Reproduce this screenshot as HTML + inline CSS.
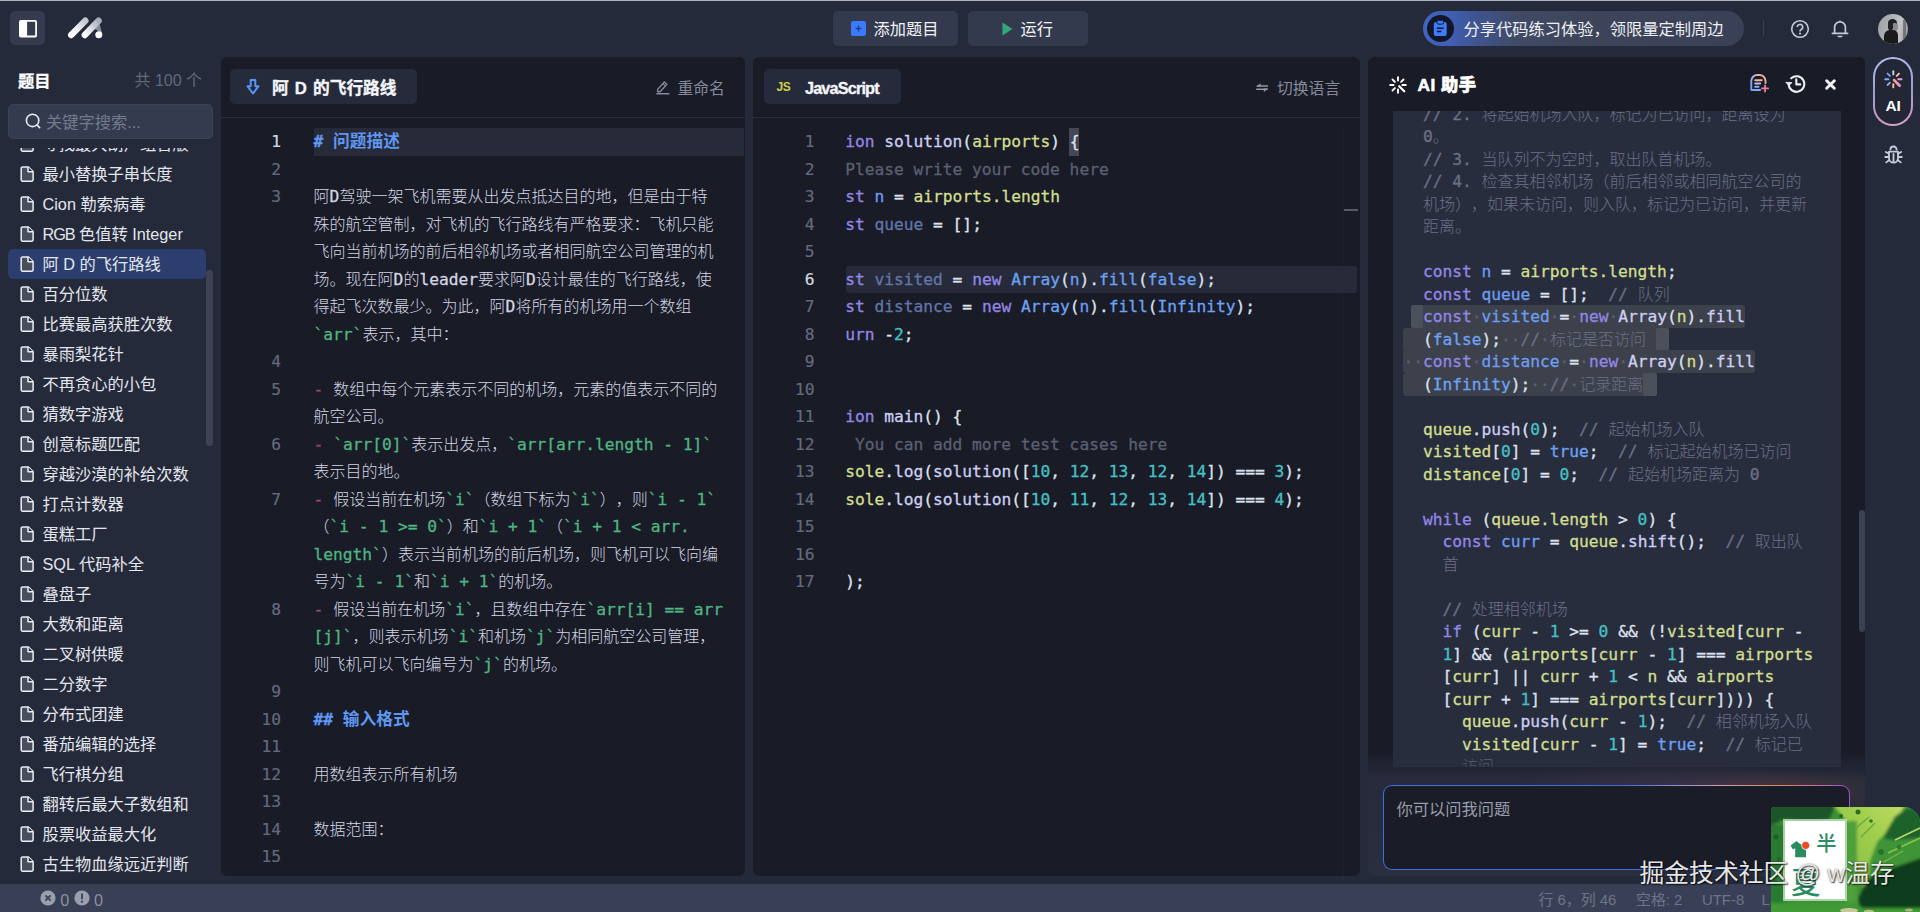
<!DOCTYPE html>
<html lang="zh-CN">
<head>
<meta charset="utf-8">
<title>代码练习</title>
<style>
*{box-sizing:border-box;margin:0;padding:0}
html,body{width:1920px;height:912px;overflow:hidden;background:#252a3a}
body{position:relative;font-family:"Liberation Sans","Noto Sans CJK SC",sans-serif;font-size:16.25px;color:#e6e8f0;text-spacing-trim:space-all}
.abs{position:absolute}
.mono{font-family:"DejaVu Sans Mono","Liberation Mono","Noto Sans CJK SC",monospace;letter-spacing:-0.03px}
#topline{left:0;top:0;width:1920px;height:1px;background:#aeb2bf}
.tbtn{position:absolute;top:11px;height:35px;border-radius:5px;background:#333a4d}
.tbtn span{position:absolute;top:0.5px;line-height:35px;font-size:16.25px;color:#f2f3f7;white-space:nowrap}
#sb-title{-webkit-text-stroke:0.3px;left:18px;top:68.5px;line-height:24px;font-weight:bold;font-size:16.25px;color:#fff}
#sb-count{left:134.5px;top:69px;line-height:24px;font-size:16px;color:#62687a;white-space:nowrap}
#search{left:8px;top:104px;width:205px;height:34.5px;border-radius:5px;background:#353b4f;border:1px solid #3c4257}
#search span{position:absolute;left:37px;top:1px;line-height:33px;font-size:16.25px;color:#747a8b;white-space:nowrap}
#list{left:0;top:147.5px;width:218px;height:733px;overflow:hidden}
.it{position:absolute;left:8px;width:198px;height:30px;border-radius:5px}
.it.sel{background:#2b3e6e}
.it svg{position:absolute;left:12px;top:7px}
.it span{position:absolute;left:34.5px;top:0;line-height:30px;font-size:16.25px;color:#e4e6ee;white-space:nowrap}
#sb-scroll{left:206px;top:270px;width:7px;height:176px;background:#3d4255;border-radius:3px}
.panel{position:absolute;top:57px;height:819px;background:#191b27;border-radius:6px;overflow:hidden}
.sep{position:absolute;left:0;right:0;top:60px;height:1px;background:#2a2d3b}
.tab{position:absolute;top:12px;height:35px;border-radius:5px;background:#262b3b}
.tab b{-webkit-text-stroke:0.35px;position:absolute;top:1.5px;line-height:35px;font-size:16.7px;word-spacing:1.5px;color:#f4f5f9;white-space:nowrap}
.hact{position:absolute;top:19.7px;line-height:24px;font-size:15.8px;color:#858a9b;white-space:nowrap}
.ed{position:absolute;left:0;top:71.1px;right:0}
.ln{position:absolute;left:0;height:27.5px;line-height:27.5px;font-size:16.25px;color:#646a7e;-webkit-text-stroke:0.2px;text-align:right;white-space:pre}
.ln.act{color:#d4d8e4}
.row{-webkit-text-stroke:0.3px;position:absolute;height:27.5px;line-height:27.5px;font-size:16.25px;white-space:pre;color:#d3d6e2}
.z{font-size:16px;font-weight:300;-webkit-text-stroke:0;letter-spacing:0}
.hl{position:absolute;height:27.5px;background:#262a39}
.k{color:#9488e6}.v{color:#6f9df0}.d{color:#6276a8}.y{color:#d2df8e}.f{color:#cdd0f2}.w{color:#dfe2ee}.t{color:#45c1c6}.c{color:#5b6072}.b{color:#6ea3f3}
.g{color:#4fb581}.r{color:#99455b}.h{color:#5f97f1;font-weight:bold}
.h .z{font-weight:bold;font-size:16.7px}
#aicode{left:25px;top:54px;width:448px;height:656px;background:#282d3e;overflow:hidden}
#aicode .c{color:#6b7083}
.ar{-webkit-text-stroke:0.3px;position:absolute;left:30px;height:22.5px;line-height:22.5px;font-size:16.25px;white-space:pre;color:#dfe2ee}
.ws{color:#5b6070}
.selr{position:absolute;height:22.7px;background:#3d414c;border-radius:3px}
.sell{position:absolute;height:22.7px;background:#4c505b;border-radius:2px}
#status{left:0;top:884px;width:1920px;height:28px;background:#394055}
#status span{position:absolute;top:4px;line-height:24px;font-size:14.9px;color:#6d7489;white-space:nowrap}
</style>
</head>
<body>
<div id="topline" class="abs"></div>
<div id="topbar">
  <div class="abs" style="left:10px;top:11px;width:35px;height:34px;border-radius:5px;background:#353a4e"></div>
  <svg class="abs" style="left:18.5px;top:20px" width="18" height="18" viewBox="0 0 18 18"><rect x="0.9" y="0.9" width="16.2" height="15.6" rx="1" fill="none" stroke="#fff" stroke-width="1.8"/><rect x="0.9" y="0.9" width="7.2" height="15.6" fill="#fff"/></svg>
  <svg class="abs" style="left:66px;top:15px" width="40" height="26" viewBox="0 0 40 26">
    <defs><linearGradient id="lg1" x1="0" y1="1" x2="1" y2="0"><stop offset="0" stop-color="#ffffff"/><stop offset="0.55" stop-color="#e4e6ec"/><stop offset="1" stop-color="#c4c7d0"/></linearGradient>
    <linearGradient id="lg2" x1="0" y1="1" x2="1" y2="0"><stop offset="0" stop-color="#ffffff"/><stop offset="0.5" stop-color="#d6d8df"/><stop offset="1" stop-color="#a9adb9"/></linearGradient></defs>
    <path d="M32.6 5.3 L36.2 19 L27 12.500 Z" fill="#9a9eab" opacity="0.85"/>
    <path d="M5.200 20 L19.300 5.700" stroke="url(#lg1)" stroke-width="6.400" stroke-linecap="round" fill="none"/>
    <path d="M18.800 20 L32.600 5.700" stroke="url(#lg2)" stroke-width="6.400" stroke-linecap="round" fill="none"/>
    <circle cx="32.800" cy="19.800" r="3.500" fill="#fff"/>
  </svg>

  <div class="tbtn" style="left:833px;width:125px">
    <svg class="abs" style="left:18px;top:10px" width="15" height="15" viewBox="0 0 15 15"><rect width="15" height="15" rx="2.2" fill="#3b7bfb"/><path d="M7.5 4.6v5.8M4.6 7.5h5.8" stroke="#1d3b8a" stroke-width="1.3"/></svg>
    <span style="left:40.5px">添加题目</span>
  </div>
  <div class="tbtn" style="left:968px;width:120px">
    <svg class="abs" style="left:34px;top:10.5px" width="11" height="14" viewBox="0 0 11 14"><path d="M0.5 0.5 L10.5 7 L0.5 13.5 Z" fill="#2fa97c"/></svg>
    <span style="left:52.5px">运行</span>
  </div>

  <div class="abs" style="left:1423px;top:11px;width:321px;height:35px;border-radius:18px;background:linear-gradient(90deg,#3f65c2 0%,#3f60b4 8%,#3f538f 17%,#414b66 29%,#3e455a 50%,#3a4055 100%)"></div>
  <div class="abs" style="left:1427px;top:15px;width:27px;height:27px;border-radius:50%;background:#121628"></div>
  <svg class="abs" style="left:1433px;top:20px" width="14.5" height="16.5" viewBox="0 0 15 18"><rect x="0.5" y="2.2" width="14" height="15.3" rx="2.2" fill="#3d7dfb"/><rect x="4" y="0.3" width="7" height="4.2" rx="1.2" fill="#3d7dfb" stroke="#0d1130" stroke-width="1"/><path d="M3.8 9h7.4M3.8 12.6h5" stroke="#0d1130" stroke-width="1.5"/></svg>
  <div class="abs" style="left:1463.5px;top:12px;line-height:35px;font-size:16.25px;color:#eef0f6;white-space:nowrap">分享代码练习体验，领限量定制周边</div>
  <div class="abs" style="left:1763px;top:20px;width:1px;height:16px;background:#3a4054"></div>
  <svg class="abs" style="left:1790px;top:19px" width="20" height="20" viewBox="0 0 20 20"><circle cx="10" cy="10" r="8.300" fill="none" stroke="#c6c9d5" stroke-width="1.600"/><path d="M7.300 8.100a2.700 2.700 0 1 1 3.900 2.400c-.8.450-1.200.9-1.200 1.900" fill="none" stroke="#c6c9d5" stroke-width="1.600"/><circle cx="10" cy="14.600" r="1.050" fill="#c6c9d5"/></svg>
  <svg class="abs" style="left:1830px;top:18px" width="20" height="21" viewBox="0 0 20 21"><path d="M4.600 15.200V9.200a5.400 5.400 0 0 1 10.800 0V15.200" fill="none" stroke="#c6c9d5" stroke-width="1.700" stroke-linejoin="round"/><path d="M2.400 15.300h15.200" stroke="#c6c9d5" stroke-width="1.700" stroke-linecap="round"/><path d="M8.200 18.400h3.600" stroke="#c6c9d5" stroke-width="1.500" stroke-linecap="round"/><circle cx="10" cy="3.300" r="0.900" fill="#c6c9d5"/></svg>
  <div class="abs" style="left:1878px;top:14px;width:30px;height:30px;border-radius:50%;overflow:hidden;background:linear-gradient(100deg,#9fa1a8 0%,#b1b3b8 45%,#c2c3c6 70%,#8d8f94 100%)">
    <div class="abs" style="left:9.500px;top:4.500px;width:9px;height:8px;border-radius:50% 50% 40% 40%;background:#1e1e20"></div>
    <div class="abs" style="left:13.500px;top:8.500px;width:6.500px;height:8px;border-radius:40% 50% 50% 45%;background:#8c8a88"></div>
    <div class="abs" style="left:10px;top:9px;width:5px;height:7px;border-radius:40%;background:#222224"></div>
    <div class="abs" style="left:6px;top:15.500px;width:13.500px;height:16px;border-radius:6px 5px 0 0;background:#1b1b1d"></div>
    <div class="abs" style="left:25px;top:6px;width:3px;height:20px;background:rgba(70,72,76,.55)"></div>
  </div>
</div>

<div id="sidebar">
  <div id="sb-title" class="abs">题目</div>
  <div id="sb-count" class="abs">共 100 个</div>
  <div id="search" class="abs"><svg class="abs" style="left:16px;top:8.4px" width="17" height="17" viewBox="0 0 17 17"><circle cx="7.6" cy="7.4" r="6.2" fill="none" stroke="#e8eaf1" stroke-width="1.6"/><path d="M12.2 12.2l2.4 2.4" stroke="#e8eaf1" stroke-width="1.7" stroke-linecap="round"/></svg><span>关键字搜索...</span></div>
  <div id="list" class="abs">
    <div class="it" style="top:-18.5px"><svg width="14" height="16" viewBox="0 0 14 16"><path d="M2.6 0.9h5.6l4.9 4.6v8.3a1.4 1.4 0 0 1-1.4 1.4H2.6a1.4 1.4 0 0 1-1.4-1.4V2.3A1.4 1.4 0 0 1 2.6 0.9z" fill="#494e5d" stroke="#eceef4" stroke-width="1.5" stroke-linejoin="round"/><path d="M8 1v4.7h5" fill="#252a3a" stroke="#eceef4" stroke-width="1.5" stroke-linejoin="round"/></svg><span>寻找最大葫芦组合版</span></div>
    <div class="it" style="top:11.5px"><svg width="14" height="16" viewBox="0 0 14 16"><path d="M2.6 0.9h5.6l4.9 4.6v8.3a1.4 1.4 0 0 1-1.4 1.4H2.6a1.4 1.4 0 0 1-1.4-1.4V2.3A1.4 1.4 0 0 1 2.6 0.9z" fill="#494e5d" stroke="#eceef4" stroke-width="1.5" stroke-linejoin="round"/><path d="M8 1v4.7h5" fill="#252a3a" stroke="#eceef4" stroke-width="1.5" stroke-linejoin="round"/></svg><span>最小替换子串长度</span></div>
    <div class="it" style="top:41.5px"><svg width="14" height="16" viewBox="0 0 14 16"><path d="M2.6 0.9h5.6l4.9 4.6v8.3a1.4 1.4 0 0 1-1.4 1.4H2.6a1.4 1.4 0 0 1-1.4-1.4V2.3A1.4 1.4 0 0 1 2.6 0.9z" fill="#494e5d" stroke="#eceef4" stroke-width="1.5" stroke-linejoin="round"/><path d="M8 1v4.7h5" fill="#252a3a" stroke="#eceef4" stroke-width="1.5" stroke-linejoin="round"/></svg><span>Cion 勒索病毒</span></div>
    <div class="it" style="top:71.5px"><svg width="14" height="16" viewBox="0 0 14 16"><path d="M2.6 0.9h5.6l4.9 4.6v8.3a1.4 1.4 0 0 1-1.4 1.4H2.6a1.4 1.4 0 0 1-1.4-1.4V2.3A1.4 1.4 0 0 1 2.6 0.9z" fill="#494e5d" stroke="#eceef4" stroke-width="1.5" stroke-linejoin="round"/><path d="M8 1v4.7h5" fill="#252a3a" stroke="#eceef4" stroke-width="1.5" stroke-linejoin="round"/></svg><span><i style="font-style:normal;letter-spacing:-1.1px">RGB</i> 色值转 Integer</span></div>
    <div class="it sel" style="top:101.5px"><svg width="14" height="16" viewBox="0 0 14 16"><path d="M2.6 0.9h5.6l4.9 4.6v8.3a1.4 1.4 0 0 1-1.4 1.4H2.6a1.4 1.4 0 0 1-1.4-1.4V2.3A1.4 1.4 0 0 1 2.6 0.9z" fill="#494e5d" stroke="#eceef4" stroke-width="1.5" stroke-linejoin="round"/><path d="M8 1v4.7h5" fill="#252a3a" stroke="#eceef4" stroke-width="1.5" stroke-linejoin="round"/></svg><span>阿 D 的飞行路线</span></div>
    <div class="it" style="top:131.5px"><svg width="14" height="16" viewBox="0 0 14 16"><path d="M2.6 0.9h5.6l4.9 4.6v8.3a1.4 1.4 0 0 1-1.4 1.4H2.6a1.4 1.4 0 0 1-1.4-1.4V2.3A1.4 1.4 0 0 1 2.6 0.9z" fill="#494e5d" stroke="#eceef4" stroke-width="1.5" stroke-linejoin="round"/><path d="M8 1v4.7h5" fill="#252a3a" stroke="#eceef4" stroke-width="1.5" stroke-linejoin="round"/></svg><span>百分位数</span></div>
    <div class="it" style="top:161.5px"><svg width="14" height="16" viewBox="0 0 14 16"><path d="M2.6 0.9h5.6l4.9 4.6v8.3a1.4 1.4 0 0 1-1.4 1.4H2.6a1.4 1.4 0 0 1-1.4-1.4V2.3A1.4 1.4 0 0 1 2.6 0.9z" fill="#494e5d" stroke="#eceef4" stroke-width="1.5" stroke-linejoin="round"/><path d="M8 1v4.7h5" fill="#252a3a" stroke="#eceef4" stroke-width="1.5" stroke-linejoin="round"/></svg><span>比赛最高获胜次数</span></div>
    <div class="it" style="top:191.5px"><svg width="14" height="16" viewBox="0 0 14 16"><path d="M2.6 0.9h5.6l4.9 4.6v8.3a1.4 1.4 0 0 1-1.4 1.4H2.6a1.4 1.4 0 0 1-1.4-1.4V2.3A1.4 1.4 0 0 1 2.6 0.9z" fill="#494e5d" stroke="#eceef4" stroke-width="1.5" stroke-linejoin="round"/><path d="M8 1v4.7h5" fill="#252a3a" stroke="#eceef4" stroke-width="1.5" stroke-linejoin="round"/></svg><span>暴雨梨花针</span></div>
    <div class="it" style="top:221.5px"><svg width="14" height="16" viewBox="0 0 14 16"><path d="M2.6 0.9h5.6l4.9 4.6v8.3a1.4 1.4 0 0 1-1.4 1.4H2.6a1.4 1.4 0 0 1-1.4-1.4V2.3A1.4 1.4 0 0 1 2.6 0.9z" fill="#494e5d" stroke="#eceef4" stroke-width="1.5" stroke-linejoin="round"/><path d="M8 1v4.7h5" fill="#252a3a" stroke="#eceef4" stroke-width="1.5" stroke-linejoin="round"/></svg><span>不再贪心的小包</span></div>
    <div class="it" style="top:251.5px"><svg width="14" height="16" viewBox="0 0 14 16"><path d="M2.6 0.9h5.6l4.9 4.6v8.3a1.4 1.4 0 0 1-1.4 1.4H2.6a1.4 1.4 0 0 1-1.4-1.4V2.3A1.4 1.4 0 0 1 2.6 0.9z" fill="#494e5d" stroke="#eceef4" stroke-width="1.5" stroke-linejoin="round"/><path d="M8 1v4.7h5" fill="#252a3a" stroke="#eceef4" stroke-width="1.5" stroke-linejoin="round"/></svg><span>猜数字游戏</span></div>
    <div class="it" style="top:281.5px"><svg width="14" height="16" viewBox="0 0 14 16"><path d="M2.6 0.9h5.6l4.9 4.6v8.3a1.4 1.4 0 0 1-1.4 1.4H2.6a1.4 1.4 0 0 1-1.4-1.4V2.3A1.4 1.4 0 0 1 2.6 0.9z" fill="#494e5d" stroke="#eceef4" stroke-width="1.5" stroke-linejoin="round"/><path d="M8 1v4.7h5" fill="#252a3a" stroke="#eceef4" stroke-width="1.5" stroke-linejoin="round"/></svg><span>创意标题匹配</span></div>
    <div class="it" style="top:311.5px"><svg width="14" height="16" viewBox="0 0 14 16"><path d="M2.6 0.9h5.6l4.9 4.6v8.3a1.4 1.4 0 0 1-1.4 1.4H2.6a1.4 1.4 0 0 1-1.4-1.4V2.3A1.4 1.4 0 0 1 2.6 0.9z" fill="#494e5d" stroke="#eceef4" stroke-width="1.5" stroke-linejoin="round"/><path d="M8 1v4.7h5" fill="#252a3a" stroke="#eceef4" stroke-width="1.5" stroke-linejoin="round"/></svg><span>穿越沙漠的补给次数</span></div>
    <div class="it" style="top:341.5px"><svg width="14" height="16" viewBox="0 0 14 16"><path d="M2.6 0.9h5.6l4.9 4.6v8.3a1.4 1.4 0 0 1-1.4 1.4H2.6a1.4 1.4 0 0 1-1.4-1.4V2.3A1.4 1.4 0 0 1 2.6 0.9z" fill="#494e5d" stroke="#eceef4" stroke-width="1.5" stroke-linejoin="round"/><path d="M8 1v4.7h5" fill="#252a3a" stroke="#eceef4" stroke-width="1.5" stroke-linejoin="round"/></svg><span>打点计数器</span></div>
    <div class="it" style="top:371.5px"><svg width="14" height="16" viewBox="0 0 14 16"><path d="M2.6 0.9h5.6l4.9 4.6v8.3a1.4 1.4 0 0 1-1.4 1.4H2.6a1.4 1.4 0 0 1-1.4-1.4V2.3A1.4 1.4 0 0 1 2.6 0.9z" fill="#494e5d" stroke="#eceef4" stroke-width="1.5" stroke-linejoin="round"/><path d="M8 1v4.7h5" fill="#252a3a" stroke="#eceef4" stroke-width="1.5" stroke-linejoin="round"/></svg><span>蛋糕工厂</span></div>
    <div class="it" style="top:401.5px"><svg width="14" height="16" viewBox="0 0 14 16"><path d="M2.6 0.9h5.6l4.9 4.6v8.3a1.4 1.4 0 0 1-1.4 1.4H2.6a1.4 1.4 0 0 1-1.4-1.4V2.3A1.4 1.4 0 0 1 2.6 0.9z" fill="#494e5d" stroke="#eceef4" stroke-width="1.5" stroke-linejoin="round"/><path d="M8 1v4.7h5" fill="#252a3a" stroke="#eceef4" stroke-width="1.5" stroke-linejoin="round"/></svg><span>SQL 代码补全</span></div>
    <div class="it" style="top:431.5px"><svg width="14" height="16" viewBox="0 0 14 16"><path d="M2.6 0.9h5.6l4.9 4.6v8.3a1.4 1.4 0 0 1-1.4 1.4H2.6a1.4 1.4 0 0 1-1.4-1.4V2.3A1.4 1.4 0 0 1 2.6 0.9z" fill="#494e5d" stroke="#eceef4" stroke-width="1.5" stroke-linejoin="round"/><path d="M8 1v4.7h5" fill="#252a3a" stroke="#eceef4" stroke-width="1.5" stroke-linejoin="round"/></svg><span>叠盘子</span></div>
    <div class="it" style="top:461.5px"><svg width="14" height="16" viewBox="0 0 14 16"><path d="M2.6 0.9h5.6l4.9 4.6v8.3a1.4 1.4 0 0 1-1.4 1.4H2.6a1.4 1.4 0 0 1-1.4-1.4V2.3A1.4 1.4 0 0 1 2.6 0.9z" fill="#494e5d" stroke="#eceef4" stroke-width="1.5" stroke-linejoin="round"/><path d="M8 1v4.7h5" fill="#252a3a" stroke="#eceef4" stroke-width="1.5" stroke-linejoin="round"/></svg><span>大数和距离</span></div>
    <div class="it" style="top:491.5px"><svg width="14" height="16" viewBox="0 0 14 16"><path d="M2.6 0.9h5.6l4.9 4.6v8.3a1.4 1.4 0 0 1-1.4 1.4H2.6a1.4 1.4 0 0 1-1.4-1.4V2.3A1.4 1.4 0 0 1 2.6 0.9z" fill="#494e5d" stroke="#eceef4" stroke-width="1.5" stroke-linejoin="round"/><path d="M8 1v4.7h5" fill="#252a3a" stroke="#eceef4" stroke-width="1.5" stroke-linejoin="round"/></svg><span>二叉树供暖</span></div>
    <div class="it" style="top:521.5px"><svg width="14" height="16" viewBox="0 0 14 16"><path d="M2.6 0.9h5.6l4.9 4.6v8.3a1.4 1.4 0 0 1-1.4 1.4H2.6a1.4 1.4 0 0 1-1.4-1.4V2.3A1.4 1.4 0 0 1 2.6 0.9z" fill="#494e5d" stroke="#eceef4" stroke-width="1.5" stroke-linejoin="round"/><path d="M8 1v4.7h5" fill="#252a3a" stroke="#eceef4" stroke-width="1.5" stroke-linejoin="round"/></svg><span>二分数字</span></div>
    <div class="it" style="top:551.5px"><svg width="14" height="16" viewBox="0 0 14 16"><path d="M2.6 0.9h5.6l4.9 4.6v8.3a1.4 1.4 0 0 1-1.4 1.4H2.6a1.4 1.4 0 0 1-1.4-1.4V2.3A1.4 1.4 0 0 1 2.6 0.9z" fill="#494e5d" stroke="#eceef4" stroke-width="1.5" stroke-linejoin="round"/><path d="M8 1v4.7h5" fill="#252a3a" stroke="#eceef4" stroke-width="1.5" stroke-linejoin="round"/></svg><span>分布式团建</span></div>
    <div class="it" style="top:581.5px"><svg width="14" height="16" viewBox="0 0 14 16"><path d="M2.6 0.9h5.6l4.9 4.6v8.3a1.4 1.4 0 0 1-1.4 1.4H2.6a1.4 1.4 0 0 1-1.4-1.4V2.3A1.4 1.4 0 0 1 2.6 0.9z" fill="#494e5d" stroke="#eceef4" stroke-width="1.5" stroke-linejoin="round"/><path d="M8 1v4.7h5" fill="#252a3a" stroke="#eceef4" stroke-width="1.5" stroke-linejoin="round"/></svg><span>番茄编辑的选择</span></div>
    <div class="it" style="top:611.5px"><svg width="14" height="16" viewBox="0 0 14 16"><path d="M2.6 0.9h5.6l4.9 4.6v8.3a1.4 1.4 0 0 1-1.4 1.4H2.6a1.4 1.4 0 0 1-1.4-1.4V2.3A1.4 1.4 0 0 1 2.6 0.9z" fill="#494e5d" stroke="#eceef4" stroke-width="1.5" stroke-linejoin="round"/><path d="M8 1v4.7h5" fill="#252a3a" stroke="#eceef4" stroke-width="1.5" stroke-linejoin="round"/></svg><span>飞行棋分组</span></div>
    <div class="it" style="top:641.5px"><svg width="14" height="16" viewBox="0 0 14 16"><path d="M2.6 0.9h5.6l4.9 4.6v8.3a1.4 1.4 0 0 1-1.4 1.4H2.6a1.4 1.4 0 0 1-1.4-1.4V2.3A1.4 1.4 0 0 1 2.6 0.9z" fill="#494e5d" stroke="#eceef4" stroke-width="1.5" stroke-linejoin="round"/><path d="M8 1v4.7h5" fill="#252a3a" stroke="#eceef4" stroke-width="1.5" stroke-linejoin="round"/></svg><span>翻转后最大子数组和</span></div>
    <div class="it" style="top:671.5px"><svg width="14" height="16" viewBox="0 0 14 16"><path d="M2.6 0.9h5.6l4.9 4.6v8.3a1.4 1.4 0 0 1-1.4 1.4H2.6a1.4 1.4 0 0 1-1.4-1.4V2.3A1.4 1.4 0 0 1 2.6 0.9z" fill="#494e5d" stroke="#eceef4" stroke-width="1.5" stroke-linejoin="round"/><path d="M8 1v4.7h5" fill="#252a3a" stroke="#eceef4" stroke-width="1.5" stroke-linejoin="round"/></svg><span>股票收益最大化</span></div>
    <div class="it" style="top:701.5px"><svg width="14" height="16" viewBox="0 0 14 16"><path d="M2.6 0.9h5.6l4.9 4.6v8.3a1.4 1.4 0 0 1-1.4 1.4H2.6a1.4 1.4 0 0 1-1.4-1.4V2.3A1.4 1.4 0 0 1 2.6 0.9z" fill="#494e5d" stroke="#eceef4" stroke-width="1.5" stroke-linejoin="round"/><path d="M8 1v4.7h5" fill="#252a3a" stroke="#eceef4" stroke-width="1.5" stroke-linejoin="round"/></svg><span>古生物血缘远近判断</span></div>
  </div>
  <div id="sb-scroll" class="abs"></div>
</div>
<div class="panel" id="p1" style="left:221px;width:524px">
  <div class="tab" style="left:9px;width:187px"><svg class="abs" style="left:15.5px;top:9.5px" width="14" height="16" viewBox="0 0 14 16"><path d="M4.700 1.100h4.600v6.100h3.300L7 14.500 1.400 7.200h3.300z" fill="none" stroke="#5595f7" stroke-width="2" stroke-linejoin="round"/></svg><b style="left:42px">阿 D 的飞行路线</b></div>
  <svg class="abs" style="left:434px;top:21.600px" width="16" height="16" viewBox="0 0 16 16"><path d="M2.600 10.400L9.400 3l2.500 2.300-6.800 7.400H2.600z" fill="none" stroke="#858a9b" stroke-width="1.400" stroke-linejoin="round"/><path d="M7.900 4.600l2.500 2.300" stroke="#858a9b" stroke-width="1.200"/><path d="M1.400 14.800h13" stroke="#858a9b" stroke-width="1.400"/></svg>
  <div class="hact" style="left:456.5px">重命名</div>
  <div class="sep"></div>
  <div class="ed mono">
    <div class="hl" style="left:92.6px;top:-0.4px;width:430px;height:28px"></div>
    <div class="ln act" style="top:0.0px;width:60px">1</div>
    <div class="row" style="left:92.6px;top:0.0px"><span class="h"># <span class="z">问题描述</span></span></div>
    <div class="ln" style="top:27.5px;width:60px">2</div>
    <div class="ln" style="top:55.0px;width:60px">3</div>
    <div class="row" style="left:92.6px;top:55.0px"><span class="z">阿</span>D<span class="z">驾驶一架飞机需要从出发点抵达目的地，但是由于特</span></div>
    <div class="row" style="left:92.6px;top:82.5px"><span class="z">殊的航空管制，对飞机的飞行路线有严格要求：飞机只能</span></div>
    <div class="row" style="left:92.6px;top:110.0px"><span class="z">飞向当前机场的前后相邻机场或者相同航空公司管理的机</span></div>
    <div class="row" style="left:92.6px;top:137.5px"><span class="z">场。现在阿</span>D<span class="z">的</span>leader<span class="z">要求阿</span>D<span class="z">设计最佳的飞行路线，使</span></div>
    <div class="row" style="left:92.6px;top:165.0px"><span class="z">得起飞次数最少。为此，阿</span>D<span class="z">将所有的机场用一个数组</span></div>
    <div class="row" style="left:92.6px;top:192.5px"><span class="g">`arr`</span><span class="z">表示，其中：</span></div>
    <div class="ln" style="top:220.0px;width:60px">4</div>
    <div class="ln" style="top:247.5px;width:60px">5</div>
    <div class="row" style="left:92.6px;top:247.5px"><span class="r">-</span> <span class="z">数组中每个元素表示不同的机场，元素的值表示不同的</span></div>
    <div class="row" style="left:92.6px;top:275.0px"><span class="z">航空公司。</span></div>
    <div class="ln" style="top:302.5px;width:60px">6</div>
    <div class="row" style="left:92.6px;top:302.5px"><span class="r">-</span> <span class="g">`arr[0]`</span><span class="z">表示出发点，</span><span class="g">`arr[arr.length - 1]`</span></div>
    <div class="row" style="left:92.6px;top:330.0px"><span class="z">表示目的地。</span></div>
    <div class="ln" style="top:357.5px;width:60px">7</div>
    <div class="row" style="left:92.6px;top:357.5px"><span class="r">-</span> <span class="z">假设当前在机场</span><span class="g">`i`</span><span class="z">（数组下标为</span><span class="g">`i`</span><span class="z">），则</span><span class="g">`i - 1`</span></div>
    <div class="row" style="left:92.6px;top:385.0px"><span class="z">（</span><span class="g">`i - 1 &gt;= 0`</span><span class="z">）和</span><span class="g">`i + 1`</span><span class="z">（</span><span class="g">`i + 1 &lt; arr.</span></div>
    <div class="row" style="left:92.6px;top:412.5px"><span class="g">length`</span><span class="z">）表示当前机场的前后机场，则飞机可以飞向编</span></div>
    <div class="row" style="left:92.6px;top:440.0px"><span class="z">号为</span><span class="g">`i - 1`</span><span class="z">和</span><span class="g">`i + 1`</span><span class="z">的机场。</span></div>
    <div class="ln" style="top:467.5px;width:60px">8</div>
    <div class="row" style="left:92.6px;top:467.5px"><span class="r">-</span> <span class="z">假设当前在机场</span><span class="g">`i`</span><span class="z">，且数组中存在</span><span class="g">`arr[i] == arr</span></div>
    <div class="row" style="left:92.6px;top:495.0px"><span class="g">[j]`</span><span class="z">，则表示机场</span><span class="g">`i`</span><span class="z">和机场</span><span class="g">`j`</span><span class="z">为相同航空公司管理，</span></div>
    <div class="row" style="left:92.6px;top:522.5px"><span class="z">则飞机可以飞向编号为</span><span class="g">`j`</span><span class="z">的机场。</span></div>
    <div class="ln" style="top:550.0px;width:60px">9</div>
    <div class="ln" style="top:577.5px;width:60px">10</div>
    <div class="row" style="left:92.6px;top:577.5px"><span class="h">## <span class="z">输入格式</span></span></div>
    <div class="ln" style="top:605.0px;width:60px">11</div>
    <div class="ln" style="top:632.5px;width:60px">12</div>
    <div class="row" style="left:92.6px;top:632.5px"><span class="z">用数组表示所有机场</span></div>
    <div class="ln" style="top:660.0px;width:60px">13</div>
    <div class="ln" style="top:687.5px;width:60px">14</div>
    <div class="row" style="left:92.6px;top:687.5px"><span class="z">数据范围：</span></div>
    <div class="ln" style="top:715.0px;width:60px">15</div>
  </div>
</div>
<div class="panel" id="p2" style="left:753px;width:607px">
  <div class="tab" style="left:10.5px;width:137px"><span class="abs" style="left:13px;top:1px;line-height:34px;font-size:12px;font-weight:bold;color:#cfcf46;letter-spacing:-0.3px">JS</span><b style="left:41.5px;font-size:16.25px;word-spacing:0;letter-spacing:-0.85px">JavaScript</b></div>
  <svg class="abs" style="left:502.800px;top:26.200px" width="12.400" height="9" viewBox="0 0 12.400 9"><path d="M0.800 3h11.400M0.200 6.200h11.400" stroke="#9498a8" stroke-width="1.400" fill="none"/><path d="M0.200 3.600L4.600 0.200V3.600zM12.200 5.600L7.800 9V5.600z" fill="#9498a8"/></svg>
  <div class="hact" style="left:524px">切换语言</div>
  <div class="sep"></div>
  <div class="abs" style="left:589.5px;top:71px;width:1px;height:748px;background:#1e202c"></div>
  <div class="abs" style="left:591px;top:151.5px;width:14px;height:2px;background:#565b6b"></div>
  <div class="ed mono">
    <div class="hl" style="left:93.1px;top:138.3px;width:511px;height:26.4px;border-radius:3px"></div>
    <div class="abs" style="left:316.4px;top:-0.6px;width:10px;height:28px;background:#454854"></div>
    <div class="ln" style="top:0.0px;width:61.5px">1</div>
    <div class="row" style="left:92.3px;top:0.0px"><span class="k">ion</span> <span class="f">solution</span><span class="w">(</span><span class="y">airports</span><span class="w">) {</span></div>
    <div class="ln" style="top:27.5px;width:61.5px">2</div>
    <div class="row" style="left:92.3px;top:27.5px"><span class="c">Please write your code here</span></div>
    <div class="ln" style="top:55.0px;width:61.5px">3</div>
    <div class="row" style="left:92.3px;top:55.0px"><span class="k">st</span> <span class="v">n</span><span class="w"> = </span><span class="y">airports.length</span></div>
    <div class="ln" style="top:82.5px;width:61.5px">4</div>
    <div class="row" style="left:92.3px;top:82.5px"><span class="k">st</span> <span class="d">queue</span><span class="w"> = [];</span></div>
    <div class="ln" style="top:110.0px;width:61.5px">5</div>
    <div class="ln act" style="top:137.5px;width:61.5px">6</div>
    <div class="row" style="left:92.3px;top:137.5px"><span class="k">st</span> <span class="d">visited</span><span class="w"> = </span><span class="k">new</span> <span class="b">Array</span><span class="w">(</span><span class="v">n</span><span class="w">).</span><span class="b">fill</span><span class="w">(</span><span class="b">false</span><span class="w">);</span></div>
    <div class="ln" style="top:165.0px;width:61.5px">7</div>
    <div class="row" style="left:92.3px;top:165.0px"><span class="k">st</span> <span class="d">distance</span><span class="w"> = </span><span class="k">new</span> <span class="b">Array</span><span class="w">(</span><span class="v">n</span><span class="w">).</span><span class="b">fill</span><span class="w">(</span><span class="b">Infinity</span><span class="w">);</span></div>
    <div class="ln" style="top:192.5px;width:61.5px">8</div>
    <div class="row" style="left:92.3px;top:192.5px"><span class="k">urn</span><span class="w"> -</span><span class="t">2</span><span class="w">;</span></div>
    <div class="ln" style="top:220.0px;width:61.5px">9</div>
    <div class="ln" style="top:247.5px;width:61.5px">10</div>
    <div class="ln" style="top:275.0px;width:61.5px">11</div>
    <div class="row" style="left:92.3px;top:275.0px"><span class="k">ion</span> <span class="f">main</span><span class="w">() {</span></div>
    <div class="ln" style="top:302.5px;width:61.5px">12</div>
    <div class="row" style="left:92.3px;top:302.5px"><span class="c"> You can add more test cases here</span></div>
    <div class="ln" style="top:330.0px;width:61.5px">13</div>
    <div class="row" style="left:92.3px;top:330.0px"><span class="y">sole</span><span class="w">.</span><span class="f">log</span><span class="w">(</span><span class="f">solution</span><span class="w">([</span><span class="t">10</span><span class="w">, </span><span class="t">12</span><span class="w">, </span><span class="t">13</span><span class="w">, </span><span class="t">12</span><span class="w">, </span><span class="t">14</span><span class="w">]) === </span><span class="t">3</span><span class="w">);</span></div>
    <div class="ln" style="top:357.5px;width:61.5px">14</div>
    <div class="row" style="left:92.3px;top:357.5px"><span class="y">sole</span><span class="w">.</span><span class="f">log</span><span class="w">(</span><span class="f">solution</span><span class="w">([</span><span class="t">10</span><span class="w">, </span><span class="t">11</span><span class="w">, </span><span class="t">12</span><span class="w">, </span><span class="t">13</span><span class="w">, </span><span class="t">14</span><span class="w">]) === </span><span class="t">4</span><span class="w">);</span></div>
    <div class="ln" style="top:385.0px;width:61.5px">15</div>
    <div class="ln" style="top:412.5px;width:61.5px">16</div>
    <div class="ln" style="top:440.0px;width:61.5px">17</div>
    <div class="row" style="left:92.3px;top:440.0px"><span class="w">);</span></div>
  </div>
</div>
<div class="panel" id="p3" style="left:1368px;width:497px">
  <svg class="abs" style="left:21px;top:18.500px" width="18" height="18" viewBox="0 0 18 18"><g stroke="#fff" stroke-width="1.900" stroke-linecap="round"><path d="M9 1.200v3.400M9 13.400v3.400M1.200 9h3.400M13.400 9h3.400M3.500 3.500l2.400 2.400M14.500 3.500l-2.400 2.400M3.500 14.500l2.400-2.400"/><path d="M10.200 10.200l5 5" stroke-width="2.300"/></g></svg>
  <div class="abs" style="left:49.500px;top:15px;line-height:26px;font-size:17.3px;font-weight:900;letter-spacing:0.500px;-webkit-text-stroke:0.600px #fff;color:#fff;white-space:nowrap">AI 助手</div>
  <svg class="abs" style="left:381px;top:16.3px" width="21" height="21" viewBox="0 0 22 22">
    <defs><linearGradient id="cg" x1="0" y1="1" x2="1" y2="0"><stop offset="0" stop-color="#6f9df5"/><stop offset="0.500" stop-color="#a9b2f2"/><stop offset="0.800" stop-color="#f0b48c"/><stop offset="1" stop-color="#ef9fb4"/></linearGradient></defs>
    <path d="M17.300 10.500V8.400a6.300 6.300 0 0 0-6.300-6.300H8.700A6.300 6.300 0 0 0 2.400 8.400v9.400h9.200" fill="none" stroke="url(#cg)" stroke-width="2" stroke-linecap="round" stroke-linejoin="round"/>
    <path d="M6.400 7.600h7" stroke="#f0b993" stroke-width="1.900" stroke-linecap="round"/>
    <path d="M6.400 11h5.400" stroke="#b6bdf5" stroke-width="1.900" stroke-linecap="round"/>
    <path d="M6.400 14.400h3.600" stroke="#8fb0f6" stroke-width="1.900" stroke-linecap="round"/>
    <path d="M16.800 13v6.400M13.600 16.200h6.400" stroke="#ee7f9c" stroke-width="1.900" stroke-linecap="round"/>
  </svg>
  <svg class="abs" style="left:416.5px;top:15.6px" width="22" height="22" viewBox="0 0 22 22"><path d="M3.700 11a7.800 7.800 0 1 0 2.500-5.700" fill="none" stroke="#eceef5" stroke-width="2.100" stroke-linecap="round"/><path d="M0.800 9.300l3 3.300 3.300-3z" fill="#eceef5" stroke="#eceef5" stroke-width="0.800" stroke-linejoin="round"/><path d="M11.300 6.400v5h4" fill="none" stroke="#eceef5" stroke-width="2.100" stroke-linecap="round" stroke-linejoin="round"/></svg>
  <svg class="abs" style="left:457px;top:22px" width="11" height="11" viewBox="0 0 11 11"><path d="M1.700 1.700l7.600 7.600M9.300 1.700l-7.600 7.600" stroke="#f2f3f8" stroke-width="2.900" stroke-linecap="round"/></svg>
  <div id="aicode" class="abs mono">
    <div class="selr" style="left:18px;top:194.4px;width:333.5px"></div><div class="sell" style="left:18px;top:194.4px;width:11.5px"></div>
    <div class="selr" style="left:10px;top:216.9px;width:265.5px"></div><div class="sell" style="left:262.5px;top:216.9px;width:13px"></div>
    <div class="selr" style="left:10px;top:239.4px;width:351.5px"></div>
    <div class="selr" style="left:10px;top:261.9px;width:253.5px"></div><div class="sell" style="left:250px;top:261.9px;width:13.5px"></div>
    <div class="ar" style="left:10.5px;top:240.30px"><span class="ws">··</span></div>
    <div class="ar" style="top:-7.20px"><span class="c">// 2. <span class="z">将起始机场入队，标记为已访问，距离设为</span></span></div>
    <div class="ar" style="top:15.30px"><span class="c">0<span class="z">。</span></span></div>
    <div class="ar" style="top:37.80px"><span class="c">// 3. <span class="z">当队列不为空时，取出队首机场。</span></span></div>
    <div class="ar" style="top:60.30px"><span class="c">// 4. <span class="z">检查其相邻机场（前后相邻或相同航空公司的</span></span></div>
    <div class="ar" style="top:82.80px"><span class="c"><span class="z">机场），如果未访问，则入队，标记为已访问，并更新</span></span></div>
    <div class="ar" style="top:105.30px"><span class="c"><span class="z">距离。</span></span></div>
    <div class="ar" style="top:150.30px"><span class="k">const</span> <span class="v">n</span><span class="w"> = </span><span class="y">airports.length</span><span class="w">;</span></div>
    <div class="ar" style="top:172.80px"><span class="k">const</span> <span class="v">queue</span><span class="w"> = [];  </span><span class="c">// <span class="z">队列</span></span></div>
    <div class="ar" style="top:195.30px"><span class="k">const</span><span class="ws">·</span><span class="v">visited</span><span class="ws">·</span><span class="w">=</span><span class="ws">·</span><span class="k">new</span><span class="ws">·</span><span class="f">Array</span><span class="w">(</span><span class="y">n</span><span class="w">).</span><span class="f">fill</span></div>
    <div class="ar" style="top:217.80px"><span class="w">(</span><span class="b">false</span><span class="w">);</span><span class="ws">·</span><span class="ws">·</span><span class="c">//</span><span class="ws">·</span><span class="c"><span class="z">标记是否访问</span></span></div>
    <div class="ar" style="top:240.30px"><span class="k">const</span><span class="ws">·</span><span class="v">distance</span><span class="ws">·</span><span class="w">=</span><span class="ws">·</span><span class="k">new</span><span class="ws">·</span><span class="f">Array</span><span class="w">(</span><span class="y">n</span><span class="w">).</span><span class="f">fill</span></div>
    <div class="ar" style="top:262.80px"><span class="w">(</span><span class="b">Infinity</span><span class="w">);</span><span class="ws">·</span><span class="ws">·</span><span class="c">//</span><span class="ws">·</span><span class="c"><span class="z">记录距离</span></span></div>
    <div class="ar" style="top:307.80px"><span class="y">queue</span><span class="w">.</span><span class="f">push</span><span class="w">(</span><span class="t">0</span><span class="w">);  </span><span class="c">// <span class="z">起始机场入队</span></span></div>
    <div class="ar" style="top:330.30px"><span class="y">visited</span><span class="w">[</span><span class="t">0</span><span class="w">] = </span><span class="b">true</span><span class="w">;  </span><span class="c">// <span class="z">标记起始机场已访问</span></span></div>
    <div class="ar" style="top:352.80px"><span class="y">distance</span><span class="w">[</span><span class="t">0</span><span class="w">] = </span><span class="t">0</span><span class="w">;  </span><span class="c">// <span class="z">起始机场距离为</span> 0</span></div>
    <div class="ar" style="top:397.80px"><span class="k">while</span><span class="w"> (</span><span class="y">queue.length</span><span class="w"> &gt; </span><span class="t">0</span><span class="w">) {</span></div>
    <div class="ar" style="top:420.30px">  <span class="k">const</span> <span class="v">curr</span><span class="w"> = </span><span class="y">queue</span><span class="w">.</span><span class="f">shift</span><span class="w">();  </span><span class="c">// <span class="z">取出队</span></span></div>
    <div class="ar" style="top:442.80px">  <span class="c"><span class="z">首</span></span></div>
    <div class="ar" style="top:487.80px">  <span class="c">// <span class="z">处理相邻机场</span></span></div>
    <div class="ar" style="top:510.30px">  <span class="k">if</span><span class="w"> (</span><span class="y">curr</span><span class="w"> - </span><span class="t">1</span><span class="w"> &gt;= </span><span class="t">0</span><span class="w"> &amp;&amp; (!</span><span class="y">visited</span><span class="w">[</span><span class="y">curr</span><span class="w"> -</span></div>
    <div class="ar" style="top:532.80px">  <span class="t">1</span><span class="w">] &amp;&amp; (</span><span class="y">airports</span><span class="w">[</span><span class="y">curr</span><span class="w"> - </span><span class="t">1</span><span class="w">] === </span><span class="y">airports</span></div>
    <div class="ar" style="top:555.30px">  <span class="w">[</span><span class="y">curr</span><span class="w">] || </span><span class="y">curr</span><span class="w"> + </span><span class="t">1</span><span class="w"> &lt; </span><span class="y">n</span><span class="w"> &amp;&amp; </span><span class="y">airports</span></div>
    <div class="ar" style="top:577.80px">  <span class="w">[</span><span class="y">curr</span><span class="w"> + </span><span class="t">1</span><span class="w">] === </span><span class="y">airports</span><span class="w">[</span><span class="y">curr</span><span class="w">]))) {</span></div>
    <div class="ar" style="top:600.30px">    <span class="y">queue</span><span class="w">.</span><span class="f">push</span><span class="w">(</span><span class="y">curr</span><span class="w"> - </span><span class="t">1</span><span class="w">);  </span><span class="c">// <span class="z">相邻机场入队</span></span></div>
    <div class="ar" style="top:622.80px">    <span class="y">visited</span><span class="w">[</span><span class="y">curr</span><span class="w"> - </span><span class="t">1</span><span class="w">] = </span><span class="b">true</span><span class="w">;  </span><span class="c">// <span class="z">标记已</span></span></div>
    <div class="ar" style="top:645.30px">    <span class="c"><span class="z">访问</span></span></div>
  </div>
  <div class="abs" style="left:0;top:694px;width:497px;height:125px;background:linear-gradient(180deg,rgba(41,45,61,0) 0%,rgba(41,45,61,.85) 22%,#2a2e3f 100%)"></div>
  <div class="abs" style="left:0;top:694px;width:497px;height:60px;background:radial-gradient(ellipse 170px 26px at 62% 62%,rgba(120,70,110,.22),rgba(120,70,110,0) 100%),radial-gradient(ellipse 120px 22px at 84% 66%,rgba(160,90,60,.20),rgba(160,90,60,0) 100%)"></div>
  <div class="abs" style="left:15.3px;top:728px;width:466.7px;height:85px;border-radius:9px;background:linear-gradient(180deg,rgba(63,111,216,0) 45%,#3f6fd8 55%),linear-gradient(90deg,#3f6fd8 0%,#3f6fd8 52%,#8f8fd0 63%,#c9a0b0 72%,#dc8a5c 84%,#c070a0 93%,#a050d8 100%);padding:1px"><div style="width:100%;height:100%;border-radius:8px;background:#1a1c28"></div></div>
  <div class="abs" style="left:28.5px;top:740px;line-height:25px;font-size:16.25px;color:#979ca9;white-space:nowrap">你可以问我问题</div>
  <div class="abs" style="left:490.5px;top:453px;width:6.5px;height:122px;border-radius:3px;background:#3b4053"></div>
</div>
<div id="rstrip">
  <div class="abs" style="left:1873px;top:56.500px;width:40px;height:69.500px;border-radius:20px;padding:2px;background:linear-gradient(172deg,#b4bdec 0%,#a3abe2 30%,#9a9cc8 50%,#c39ccb 75%,#d3a2c4 100%)"><div style="width:100%;height:100%;border-radius:18px;background:#222635"></div></div>
  <svg class="abs" style="left:1883.500px;top:70.200px" width="19" height="19" viewBox="0 0 19 19"><g stroke-width="1.900" stroke-linecap="round" fill="none"><path d="M9.300 1.200v3.200" stroke="#c3d3ff"/><path d="M1.200 9.300h3.200" stroke="#86adff"/><path d="M3.600 3.600l2.300 2.300" stroke="#7fa3f2"/><path d="M15 3.600l-2.300 2.300" stroke="#f3c48f"/><path d="M14.200 9.300h3.400" stroke="#dfa3e3"/><path d="M3.600 15l2.300-2.300" stroke="#8ca6f3"/><path d="M9.300 14.200v3.200" stroke="#f0c2a4"/><path d="M10 10l5.600 5.600" stroke="#f0a88c" stroke-width="2.500"/><path d="M13 13l2.600 2.600" stroke="#e595c4" stroke-width="2.500"/></g></svg>
  <div class="abs" style="left:1873px;top:93.500px;width:40px;text-align:center;line-height:24px;font-size:15.500px;font-weight:bold;color:#fff;letter-spacing:-0.200px">AI</div>
  <svg class="abs" style="left:1883.500px;top:144.500px" width="19" height="19" viewBox="0 0 19 19"><g fill="none" stroke="#c9ccd8" stroke-width="1.800" stroke-linecap="round" stroke-linejoin="round"><path d="M6.400 4.600a3.100 3.100 0 0 1 6.200 0"/><path d="M5 6.600h9v6.600a4.500 4.500 0 0 1-9 0z"/><path d="M9.500 9v8.200M5 8.600L1.800 7M14 8.600l3.200-1.600M5 12H1.200M17.800 12H14M5.400 15l-3.200 2.400M13.600 15l3.200 2.400"/></g></svg>
</div>

<div id="status" class="abs">
  <svg class="abs" style="left:39.7px;top:5.5px" width="16" height="16" viewBox="0 0 16 16"><circle cx="8" cy="8" r="7.6" fill="#9a9fae"/><path d="M5.3 5.3l5.4 5.4M10.7 5.3l-5.4 5.4" stroke="#394055" stroke-width="1.7"/></svg>
  <span style="left:60.3px;font-size:16.25px;color:#8b91a4;top:3.5px">0</span>
  <svg class="abs" style="left:73.5px;top:5.5px" width="16" height="16" viewBox="0 0 16 16"><circle cx="8" cy="8" r="7.6" fill="#9a9fae"/><path d="M8 3.6v5.6" stroke="#394055" stroke-width="1.9"/><circle cx="8" cy="11.7" r="1.15" fill="#394055"/></svg>
  <span style="left:94px;font-size:16.25px;color:#8b91a4;top:3.5px">0</span>
  <span style="left:1538.5px">行 6，列 46</span>
  <span style="left:1636px">空格: 2</span>
  <span style="left:1702px">UTF-8</span>
  <span style="left:1761.5px">LF</span>
</div>

<div id="overlay">
  <div class="abs" style="left:1771px;top:806.5px;width:149px;height:106px;border-radius:4px 16px 0 0;overflow:hidden;background:#3d8f35">
    <svg class="abs" style="left:0;top:0" width="149" height="106" viewBox="0 0 149 106">
      <defs>
        <linearGradient id="gl" x1="0" y1="1" x2="1" y2="0"><stop offset="0" stop-color="#7fbd42"/><stop offset="0.6" stop-color="#9fce4c"/><stop offset="1" stop-color="#bfdc62"/></linearGradient>
        <filter id="bl" x="-10%" y="-10%" width="120%" height="120%"><feGaussianBlur stdDeviation="1.6"/></filter>
        <filter id="bs" x="-10%" y="-10%" width="120%" height="120%"><feGaussianBlur stdDeviation="0.7"/></filter>
      </defs>
      <rect width="149" height="106" fill="#3d8f35"/>
      <g filter="url(#bl)">
        <path d="M-4 -4H66L58 12 38 15 14 12-4 20z" fill="#1c5529"/>
        <path d="M-4 18H14V100H-4z" fill="#2c7a31"/>
        <path d="M62 -2H134L124 18 107 34 99.500 52.500 97 80 75 74V14z" fill="url(#gl)"/>
        <path d="M111.800 30.400L124 9.600 134 2.200 153 0V31L124 34z" fill="#1f6229"/>
        <path d="M99.500 52.500L111.800 34 153 30.400V53L124 62.400z" fill="#3f9438"/>
        <path d="M87 92L97 72 124 60 153 50V104H91z" fill="#113c1e"/>
        <path d="M-4 96H76L92 101H153V110H-4z" fill="#3f9a35"/>
        <path d="M75 14H86V96H75z" fill="#4f9f3b"/>
      </g>
      <g filter="url(#bs)">
        <path d="M124 33L149 21" stroke="#b4d76a" stroke-width="1.600" fill="none"/>
        <path d="M117 46L149 31" stroke="#8cc24a" stroke-width="1.400" fill="none"/>
        <path d="M104 60L132 44" stroke="#79b944" stroke-width="1.300" fill="none"/>
        <path d="M84 22L98 10M90 30L104 16" stroke="#6aa83c" stroke-width="1.300" fill="none"/>
        <circle cx="87" cy="5" r="2.500" fill="#2a6d2c"/><circle cx="100" cy="14" r="1.800" fill="#2f752f"/><circle cx="70" cy="9" r="2" fill="#24642a"/>
        <circle cx="5" cy="30" r="2.500" fill="#1f5e29"/><circle cx="8" cy="52" r="2.200" fill="#23672b"/><circle cx="4" cy="76" r="2.600" fill="#1f5e29"/>
        <circle cx="110" cy="45" r="3" fill="#2a742e"/><circle cx="128" cy="40" r="2.400" fill="#2f7d31"/>
        <ellipse cx="78" cy="103.500" rx="9" ry="2.600" fill="#c9c79c"/><ellipse cx="98" cy="104.500" rx="5" ry="1.800" fill="#b9bd8c"/><ellipse cx="138" cy="103" rx="4" ry="1.600" fill="#a9b27c"/>
      </g>
    </svg>
    <div class="abs" style="left:11.500px;top:12.600px;width:64.500px;height:81.500px;background:rgba(214,238,214,.72)"></div>
    <div class="abs" style="left:13.500px;top:14.600px;width:60.500px;height:77.800px;background:#fff"></div>
    <svg class="abs" style="left:18.500px;top:33px" width="20" height="18" viewBox="0 0 20 18"><path d="M6.600 1L0.600 5.400 3 9.400 5.200 8.200V17.200H16V4.500C13.500 5.200 9.800 4.700 6.600 1z" fill="#2a8a5e"/><circle cx="15.700" cy="5.300" r="4.400" fill="#fff"/><circle cx="15.700" cy="5.300" r="3.600" fill="#f04a1e"/></svg>
    <div class="abs" style="left:45.3px;top:24.2px;line-height:26px;font-size:20.3px;font-weight:500;color:#2c8c64">半</div>
    <div class="abs" style="left:20px;top:57px;line-height:38px;font-size:29.5px;font-weight:500;color:#2c8c64">夏</div>
  </div>
  <div class="abs" style="left:1639.5px;top:856px;line-height:36px;font-size:24.8px;font-weight:400;color:#e6e6e6;white-space:nowrap;text-shadow:1px 1px 1.500px rgba(0,0,0,.75),0 0 2px rgba(0,0,0,.45)">掘金技术社区 @ w温存</div>
</div>

</body>
</html>
